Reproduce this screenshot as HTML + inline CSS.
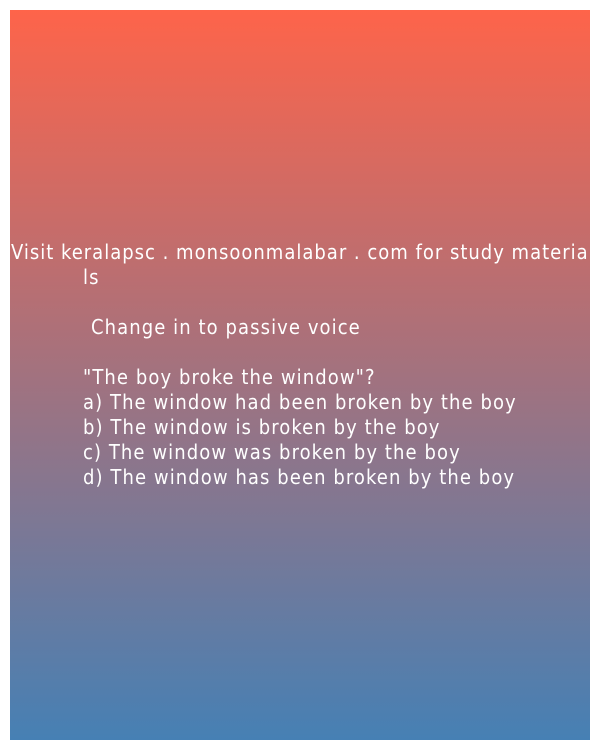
<!DOCTYPE html>
<html><head><style>
body{margin:0;width:600px;height:750px;background:#fff;position:relative;overflow:hidden}
.box{position:absolute;left:10px;top:10px;width:580px;height:730px;background:linear-gradient(#fe644a,#4680b4)}
.t{position:absolute;color:#fff;font-family:"DejaVu Sans Condensed","DejaVu Sans",sans-serif;font-stretch:condensed;font-size:20px;line-height:25px;white-space:nowrap;letter-spacing:1.08px}
</style></head><body>
<div class="box"></div>
<div class="t" style="left:11px;top:240px;letter-spacing:1px">Visit keralapsc . monsoonmalabar . com for study materia</div>
<div class="t" style="left:83px;top:265px">ls</div>
<div class="t" style="left:91px;top:315px">Change in to passive voice</div>
<div class="t" style="left:83px;top:365px">"The boy broke the window"?</div>
<div class="t" style="left:83px;top:390px">a) The window had been broken by the boy</div>
<div class="t" style="left:83px;top:415px">b) The window is broken by the boy</div>
<div class="t" style="left:83px;top:440px">c) The window was broken by the boy</div>
<div class="t" style="left:83px;top:465px">d) The window has been broken by the boy</div>
</body></html>
